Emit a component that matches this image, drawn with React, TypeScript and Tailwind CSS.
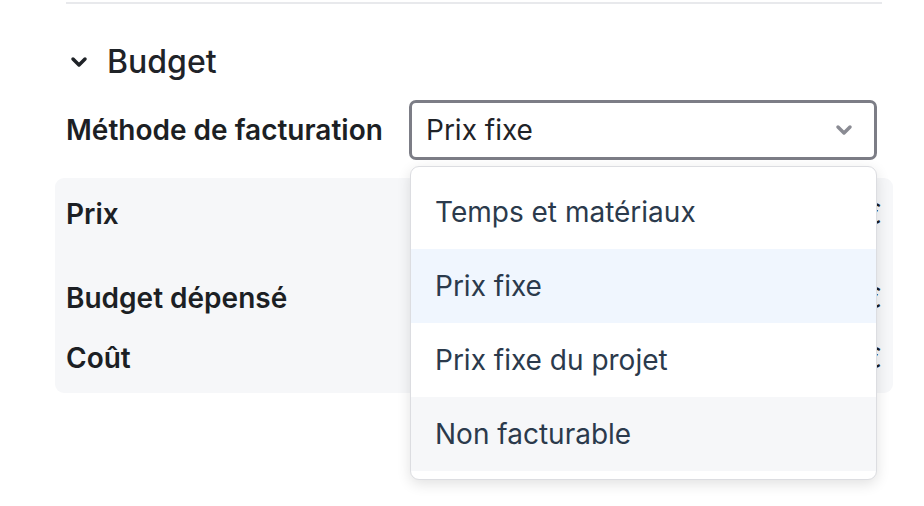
import { ChevronDown } from "lucide-react";

const options = [
  { label: "Temps et matériaux", bg: "bg-white" },
  { label: "Prix fixe", bg: "bg-[#f0f6fe]" },
  { label: "Prix fixe du projet", bg: "bg-white" },
  { label: "Non facturable", bg: "bg-[#f6f7f9]" },
];

export default function App() {
  return (
    <div className="relative w-[924px] h-[506px] overflow-hidden bg-white font-['Inter',sans-serif]">
      <div className="ml-[66px] w-[816px] pt-[2px]">
        <div className="h-[2px] bg-[#e8e9ec]" />
      </div>

      <div className="flex items-center gap-[16px] ml-[67px] mt-[36px] h-[44px]">
        <ChevronDown className="w-[24px] h-[24px] text-[#1f2328]" strokeWidth={3.5} />
        <span className="text-[32px] font-medium text-[#1f2328] leading-none">Budget</span>
      </div>

      <div className="flex items-center ml-[66px] mt-[16px]">
        <span className="w-[343px] text-[28px] font-semibold text-[#1c1f24]">Méthode de facturation</span>
        <div className="flex items-center justify-between w-[468px] h-[60px] border-[3px] border-[#7c7d86] rounded-[7px] pl-[14px] pr-[18px]">
          <span className="text-[28px] text-[#1f2328]">Prix fixe</span>
          <ChevronDown className="w-[24px] h-[24px] text-[#8a8b93]" strokeWidth={3.5} />
        </div>
      </div>

      <div className="ml-[55px] mt-[18px] w-[838px] h-[215px] rounded-[9px] bg-[#f6f7f9] px-[11px] pt-[19px]">
        <div className="flex items-center justify-between h-[34px]">
          <span className="text-[28px] font-semibold text-[#1c1f24]">Prix</span>
          <span className="text-[28px] text-[#1c1f24]">0,00 €</span>
        </div>
        <div className="flex items-center justify-between h-[34px] mt-[50px]">
          <span className="text-[28px] font-semibold text-[#1c1f24]">Budget dépensé</span>
          <span className="text-[28px] text-[#1c1f24]">0,00 €</span>
        </div>
        <div className="flex items-center justify-between h-[34px] mt-[26px]">
          <span className="text-[28px] font-semibold text-[#1c1f24]">Coût</span>
          <span className="text-[28px] text-[#1c1f24]">0,00 €</span>
        </div>
      </div>

      <div className="absolute left-[410px] top-[166px] w-[467px] rounded-[9px] border border-[#dcdde1] bg-white py-[8px] shadow-[0_4px_14px_rgba(0,0,0,0.12)]">
        {options.map((o) => (
          <div key={o.label} className={`flex items-center h-[74px] px-[24px] ${o.bg}`}>
            <span className="text-[28px] text-[#2b3a4c]">{o.label}</span>
          </div>
        ))}
      </div>
    </div>
  );
}
